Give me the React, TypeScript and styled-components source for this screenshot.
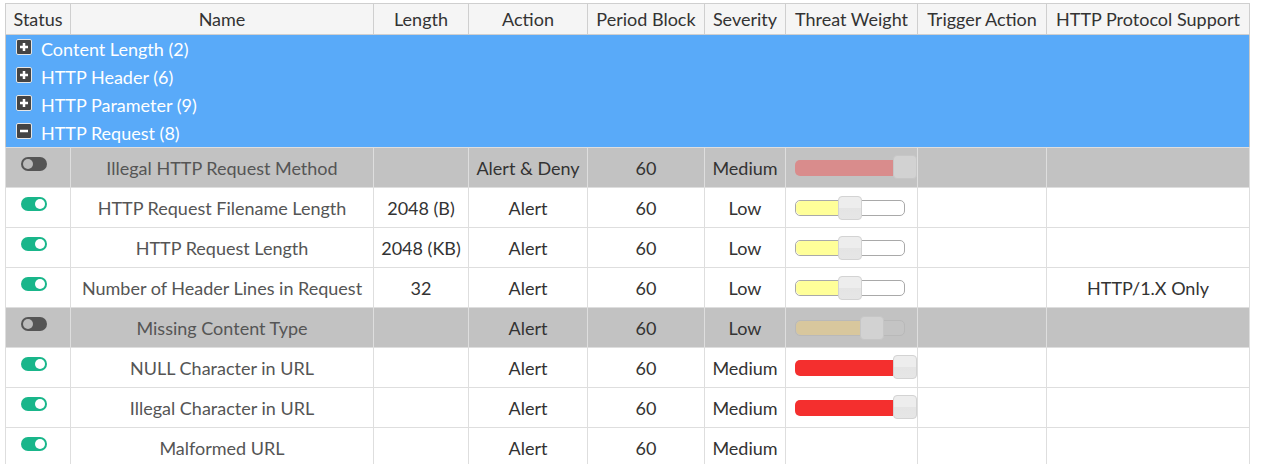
import * as React from 'react';
import styled, { createGlobalStyle, css } from 'styled-components';

const GlobalStyle = createGlobalStyle`
  body {
    margin: 0;
    padding: 3px 5px;
    background: #fff;
    font-family: Lato, "Open Sans", sans-serif;
  }
`;

type Rule = {
  name: string;
  enabled: boolean;
  length?: string;
  action: string;
  period: string;
  severity: string;
  weight?: { level: 'low' | 'medium'; value: number };
  protocol?: string;
};

const groups = [
  { label: 'Content Length (2)', open: false },
  { label: 'HTTP Header (6)', open: false },
  { label: 'HTTP Parameter (9)', open: false },
  { label: 'HTTP Request (8)', open: true },
];

const rules: Rule[] = [
  { name: 'Illegal HTTP Request Method', enabled: false, action: 'Alert & Deny', period: '60', severity: 'Medium', weight: { level: 'medium', value: 100 } },
  { name: 'HTTP Request Filename Length', enabled: true, length: '2048 (B)', action: 'Alert', period: '60', severity: 'Low', weight: { level: 'low', value: 50 } },
  { name: 'HTTP Request Length', enabled: true, length: '2048 (KB)', action: 'Alert', period: '60', severity: 'Low', weight: { level: 'low', value: 50 } },
  { name: 'Number of Header Lines in Request', enabled: true, length: '32', action: 'Alert', period: '60', severity: 'Low', weight: { level: 'low', value: 50 }, protocol: 'HTTP/1.X Only' },
  { name: 'Missing Content Type', enabled: false, action: 'Alert', period: '60', severity: 'Low', weight: { level: 'low', value: 75 } },
  { name: 'NULL Character in URL', enabled: true, action: 'Alert', period: '60', severity: 'Medium', weight: { level: 'medium', value: 100 } },
  { name: 'Illegal Character in URL', enabled: true, action: 'Alert', period: '60', severity: 'Medium', weight: { level: 'medium', value: 100 } },
  { name: 'Malformed URL', enabled: true, action: 'Alert', period: '60', severity: 'Medium' },
];

const columns = [
  { title: 'Status', width: 65 },
  { title: 'Name', width: 303 },
  { title: 'Length', width: 95 },
  { title: 'Action', width: 119 },
  { title: 'Period Block', width: 117 },
  { title: 'Severity', width: 81 },
  { title: 'Threat Weight', width: 132 },
  { title: 'Trigger Action', width: 129 },
  { title: 'HTTP Protocol Support', width: 203 },
];

const Table = styled.table`
  width: 1245px;
  border-collapse: collapse;
  table-layout: fixed;
  border: 1px solid #c8c8c8;
  font-size: 18px;
  line-height: 22px;
  color: #333;
`;

const HeadRow = styled.tr`
  height: 31px;
`;

const HeadCell = styled.th`
  padding: 0 2px;
  background: #f5f5f5;
  border: 1px solid #cfcfcf;
  font-weight: 400;
  text-align: center;
  white-space: nowrap;
  color: #333;
`;

const GroupRow = styled.tr`
  height: 28px;
  background: #59aaf9;
`;

const GroupCell = styled.td`
  padding: 0 0 0 10px;
  color: #fff;
`;

const GroupLabel = styled.div`
  display: flex;
  align-items: center;
  gap: 9px;
  height: 28px;
`;

const Expander = styled.span`
  display: flex;
  align-items: center;
  justify-content: center;
  width: 16px;
  height: 16px;
  background: #444;
  border: 1px solid #e6e6e6;
  border-radius: 2px;
  box-sizing: border-box;
  margin-top: -4px;
`;

const RuleRow = styled.tr<{ $disabled: boolean }>`
  height: 40px;
  background: ${(p) => (p.$disabled ? '#c2c2c2' : '#fff')};
`;

const Cell = styled.td<{ $muted?: boolean }>`
  padding: 0 4px;
  border: 1px solid #dedede;
  text-align: center;
  white-space: nowrap;
  color: ${(p) => (p.$muted ? '#555' : '#333')};
`;

const StatusCell = styled(Cell)`
  vertical-align: top;
  text-align: left;
  padding: 9px 0 0 15px;
  line-height: 0;
`;

const WeightCell = styled(Cell)`
  text-align: left;
  padding: 0 0 0 9px;
  overflow: visible;
`;

const Toggle = styled.span<{ $on: boolean }>`
  display: inline-block;
  position: relative;
  width: 26px;
  height: 14px;
  border-radius: 7px;
  background: ${(p) => (p.$on ? '#19b68a' : '#555')};

  &::after {
    content: '';
    position: absolute;
    top: 2px;
    ${(p) => (p.$on ? 'right: 2px;' : 'left: 2px;')}
    width: 10px;
    height: 10px;
    border-radius: 50%;
    background: ${(p) => (p.$on ? '#fff' : '#bbb')};
  }
`;

const Track = styled.div<{ $disabled: boolean; $full: boolean }>`
  position: relative;
  width: 110px;
  height: 16px;
  box-sizing: border-box;
  border-radius: 5px;
  ${(p) =>
    p.$full
      ? css`border: none;`
      : p.$disabled
      ? css`border: 1px solid #b9b9b9; background: #c4c4c4;`
      : css`border: 1px solid #a9a9a9; background: #fff;`}
`;

const fills = {
  low: { on: '#ffff99', off: '#d8c79d' },
  medium: { on: '#f42f2e', off: '#d98c8c' },
};

const Fill = styled.div<{ $color: string }>`
  height: 100%;
  border-radius: 5px 0 0 5px;
  background: ${(p) => p.$color};
`;

const Handle = styled.div<{ $disabled: boolean }>`
  position: absolute;
  top: -5px;
  width: 24px;
  height: 24px;
  box-sizing: border-box;
  border-radius: 4px;
  border: 1px solid ${(p) => (p.$disabled ? '#c6c6c6' : '#d3d3d3')};
  background: ${(p) =>
    p.$disabled ? '#d2d2d2' : 'linear-gradient(#ededed, #ededed 50%, #e4e4e4 50%, #e6e6e6)'};
`;

const PlusIcon = ({ open }: { open: boolean }) => (
  <svg width="10" height="10" viewBox="0 0 10 10">
    <rect x="1" y="3.75" width="8" height="2.5" fill="#fff" />
    {!open && <rect x="3.75" y="1" width="2.5" height="8" fill="#fff" />}
  </svg>
);

const WeightSlider = ({ level, value, disabled }: { level: 'low' | 'medium'; value: number; disabled: boolean }) => {
  const full = value >= 100;
  const fillWidth = full ? 98 : Math.round((value / 100) * 86);
  const color = disabled ? fills[level].off : fills[level].on;
  return (
    <Track $disabled={disabled} $full={full}>
      <Fill $color={color} style={{ width: fillWidth }} />
      <Handle $disabled={disabled} style={{ left: full ? 98 : fillWidth - 1 }} />
    </Track>
  );
};

export default function App() {
  return (
    <>
      <GlobalStyle />
      <Table>
        <colgroup>
          {columns.map((c) => (
            <col key={c.title} style={{ width: c.width }} />
          ))}
        </colgroup>
        <thead>
          <HeadRow>
            {columns.map((c) => (
              <HeadCell key={c.title}>{c.title}</HeadCell>
            ))}
          </HeadRow>
        </thead>
        <tbody>
          {groups.map((g) => (
            <GroupRow key={g.label}>
              <GroupCell colSpan={columns.length}>
                <GroupLabel>
                  <Expander>
                    <PlusIcon open={g.open} />
                  </Expander>
                  {g.label}
                </GroupLabel>
              </GroupCell>
            </GroupRow>
          ))}
          {rules.map((r) => (
            <RuleRow key={r.name} $disabled={!r.enabled}>
              <StatusCell>
                <Toggle $on={r.enabled} />
              </StatusCell>
              <Cell $muted>{r.name}</Cell>
              <Cell>{r.length}</Cell>
              <Cell>{r.action}</Cell>
              <Cell>{r.period}</Cell>
              <Cell>{r.severity}</Cell>
              <WeightCell>
                {r.weight && <WeightSlider level={r.weight.level} value={r.weight.value} disabled={!r.enabled} />}
              </WeightCell>
              <Cell />
              <Cell>{r.protocol}</Cell>
            </RuleRow>
          ))}
        </tbody>
      </Table>
    </>
  );
}
